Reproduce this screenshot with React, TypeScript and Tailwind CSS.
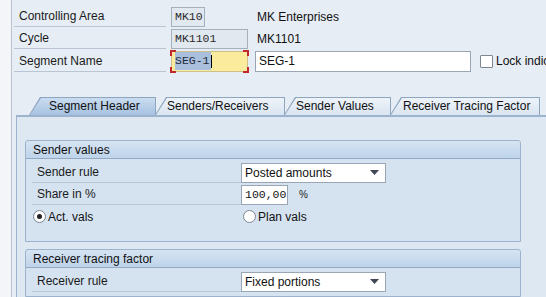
import React from "react";

const sans = "font-['Liberation_Sans',Arial,sans-serif]";
const mono = "font-['Liberation_Mono','Courier_New',monospace]";

function Label({ children, w }: { children: React.ReactNode; w: string }) {
  return (
    <div className={`${w} shrink-0 h-[21px] flex items-center border-b border-[#b9c5d3] pl-[5px] text-[12px] text-[#1a1a1a] whitespace-nowrap`}>
      {children}
    </div>
  );
}

function Dropdown({ value }: { value: string }) {
  return (
    <div className="w-[145px] shrink-0 h-[20px] bg-white border border-[#9aa6b4] flex items-center pl-[3px] pr-[6px] text-[12px] text-[#111]">
      <span className="flex-1">{value}</span>
      <svg width="9" height="5" viewBox="0 0 9 5">
        <path d="M0 0 H9 L4.5 5 Z" fill="#3f4656" />
      </svg>
    </div>
  );
}

function Tab({
  label,
  active,
  w,
  pl,
}: {
  label: string;
  active?: boolean;
  w: string;
  pl: string;
}) {
  return (
    <div className={`relative ${w} shrink-0 h-[18px] -mr-[1px]`}>
      <div className="absolute inset-0 bg-[#8ea5c0] [clip-path:polygon(11px_0,100%_0,100%_100%,0_100%)]" />
      <div
        className={`absolute left-[1px] top-[1px] right-[1px] bottom-0 [clip-path:polygon(11px_0,100%_0,100%_100%,0_100%)] ${
          active
            ? "bg-gradient-to-b from-[#cadcf0] to-[#a6c2e1]"
            : "bg-gradient-to-b from-[#eef3f9] to-[#d9e5f1]"
        }`}
      />
      <div className={`relative h-full flex items-center ${pl} text-[12px] text-[#111] whitespace-nowrap`}>
        {label}
      </div>
    </div>
  );
}

function GroupHeader({ title }: { title: string }) {
  return (
    <div className="h-[18px] bg-gradient-to-b from-[#d6e4f2] to-[#bfd4ea] border-b border-[#93aac6] rounded-t-[3px] flex items-center pl-[7px] text-[12px] text-[#111]">
      {title}
    </div>
  );
}

export default function App() {
  return (
    <div className={`${sans} w-[546px] h-[297px] overflow-hidden bg-[#e6edf5] flex`}>
      {/* left strip */}
      <div className="w-[12px] h-full bg-[#f3f5f8] border-r border-[#b8c1cc] shrink-0" />
      <div className="flex-1 flex flex-col min-w-0 overflow-hidden">
        {/* header fields */}
        <div className="pt-[6px] pl-[2px] flex flex-col gap-[1px]">
          <div className="flex items-center h-[21px]">
            <Label w="w-[152px]">Controlling Area</Label>
            <div className="ml-[5px] shrink-0 w-[34px] h-[20px] bg-[#e1e8f0] border border-[#a5b0bd] flex items-center pl-[3px] text-[11.5px] text-[#2a2a2a]">
              <span className={mono}>MK10</span>
            </div>
            <div className="ml-[52px] shrink-0 text-[12px] text-[#111] whitespace-nowrap">MK Enterprises</div>
          </div>
          <div className="flex items-center h-[21px]">
            <Label w="w-[152px]">Cycle</Label>
            <div className="ml-[5px] shrink-0 w-[77px] h-[20px] bg-[#e1e8f0] border border-[#a5b0bd] flex items-center pl-[3px] text-[11.5px] text-[#2a2a2a]">
              <span className={mono}>MK1101</span>
            </div>
            <div className="ml-[9px] shrink-0 text-[12px] text-[#111]">MK1101</div>
          </div>
          <div className="flex items-center h-[22px]">
            <Label w="w-[152px]">Segment Name</Label>
            <div className="relative shrink-0 ml-[5px] w-[77px] h-[21px] bg-[#fbeb9d] border border-[#cfc08a] flex items-center pl-[3px] text-[11.5px]">
              <span className={`${mono} bg-[#a9bfdc] text-[#1e2a3a] pr-[1px]`}>SEG-1</span>
              <span className="w-[1px] h-[13px] bg-black" />
              <span className="absolute -left-[2px] -top-[2px] w-[6px] h-[6px] border-l-2 border-t-2 border-[#c0282d]" />
              <span className="absolute -right-[2px] -top-[2px] w-[6px] h-[6px] border-r-2 border-t-2 border-[#c0282d]" />
              <span className="absolute -left-[2px] -bottom-[2px] w-[6px] h-[6px] border-l-2 border-b-2 border-[#c0282d]" />
              <span className="absolute -right-[2px] -bottom-[2px] w-[6px] h-[6px] border-r-2 border-b-2 border-[#c0282d]" />
            </div>
            <div className="ml-[7px] shrink-0 w-[216px] h-[21px] bg-white border border-[#9aa6b4] flex items-center pl-[3px] text-[12px] text-[#111]">
              SEG-1
            </div>
            <div className="ml-[9px] shrink-0 w-[13px] h-[13px] bg-white border border-[#7d8693] rounded-[1px]" />
            <div className="ml-[3px] shrink-0 text-[12px] text-[#111] whitespace-nowrap">Lock indicator</div>
          </div>
        </div>

        {/* tabs */}
        <div className="mt-[25px] flex items-end pl-[17px]">
          <Tab label="Segment Header" active w="w-[127px]" pl="pl-[20px]" />
          <Tab label="Senders/Receivers" w="w-[130px]" pl="pl-[12px]" />
          <Tab label="Sender Values" w="w-[107px]" pl="pl-[12px]" />
          <Tab label="Receiver Tracing Factor" w="w-[150px]" pl="pl-[13px]" />
        </div>

        {/* panel */}
        <div className="ml-[4px] flex-1 bg-[#dde8f3] border-l border-t-2 border-[#9db3cd] pt-[23px] pl-[8px] pr-[25px] flex flex-col gap-[7px]">
          <div className="border border-[#9db3cd] rounded-t-[3px] bg-[#d5e3f1] h-[102px] shrink-0">
            <GroupHeader title="Sender values" />
            <div className="pl-[6px] pt-[3px] flex flex-col">
              <div className="flex items-center h-[21px]">
                <Label w="w-[209px]">Sender rule</Label>
                <Dropdown value="Posted amounts" />
              </div>
              <div className="flex items-center h-[21px] mt-[1px]">
                <Label w="w-[209px]">Share in %</Label>
                <div className="w-[47px] shrink-0 h-[20px] bg-white border border-[#9aa6b4] flex items-center pl-[3px] text-[11.5px] text-[#111]">
                  <span className={mono}>100,00</span>
                </div>
                <span className="ml-[11px] text-[10px] text-[#222]">%</span>
              </div>
              <div className="flex items-center h-[21px] mt-[1px]">
                <div className="w-[211px] shrink-0 flex items-center pl-[1px]">
                  <div className="w-[13px] h-[13px] rounded-full bg-white border border-[#7d8693] flex items-center justify-center">
                    <div className="w-[5px] h-[5px] rounded-full bg-[#222]" />
                  </div>
                  <span className="ml-[2px] text-[12px] text-[#111]">Act. vals</span>
                </div>
                <div className="w-[13px] h-[13px] rounded-full bg-white border border-[#7d8693]" />
                <span className="ml-[2px] text-[12px] text-[#111]">Plan vals</span>
              </div>
            </div>
          </div>
          <div className="border border-[#9db3cd] rounded-t-[3px] bg-[#d5e3f1] flex-1">
            <GroupHeader title="Receiver tracing factor" />
            <div className="pl-[6px] pt-[3px]">
              <div className="flex items-center h-[21px]">
                <Label w="w-[209px]">Receiver rule</Label>
                <Dropdown value="Fixed portions" />
              </div>
            </div>
          </div>
        </div>
      </div>
    </div>
  );
}
